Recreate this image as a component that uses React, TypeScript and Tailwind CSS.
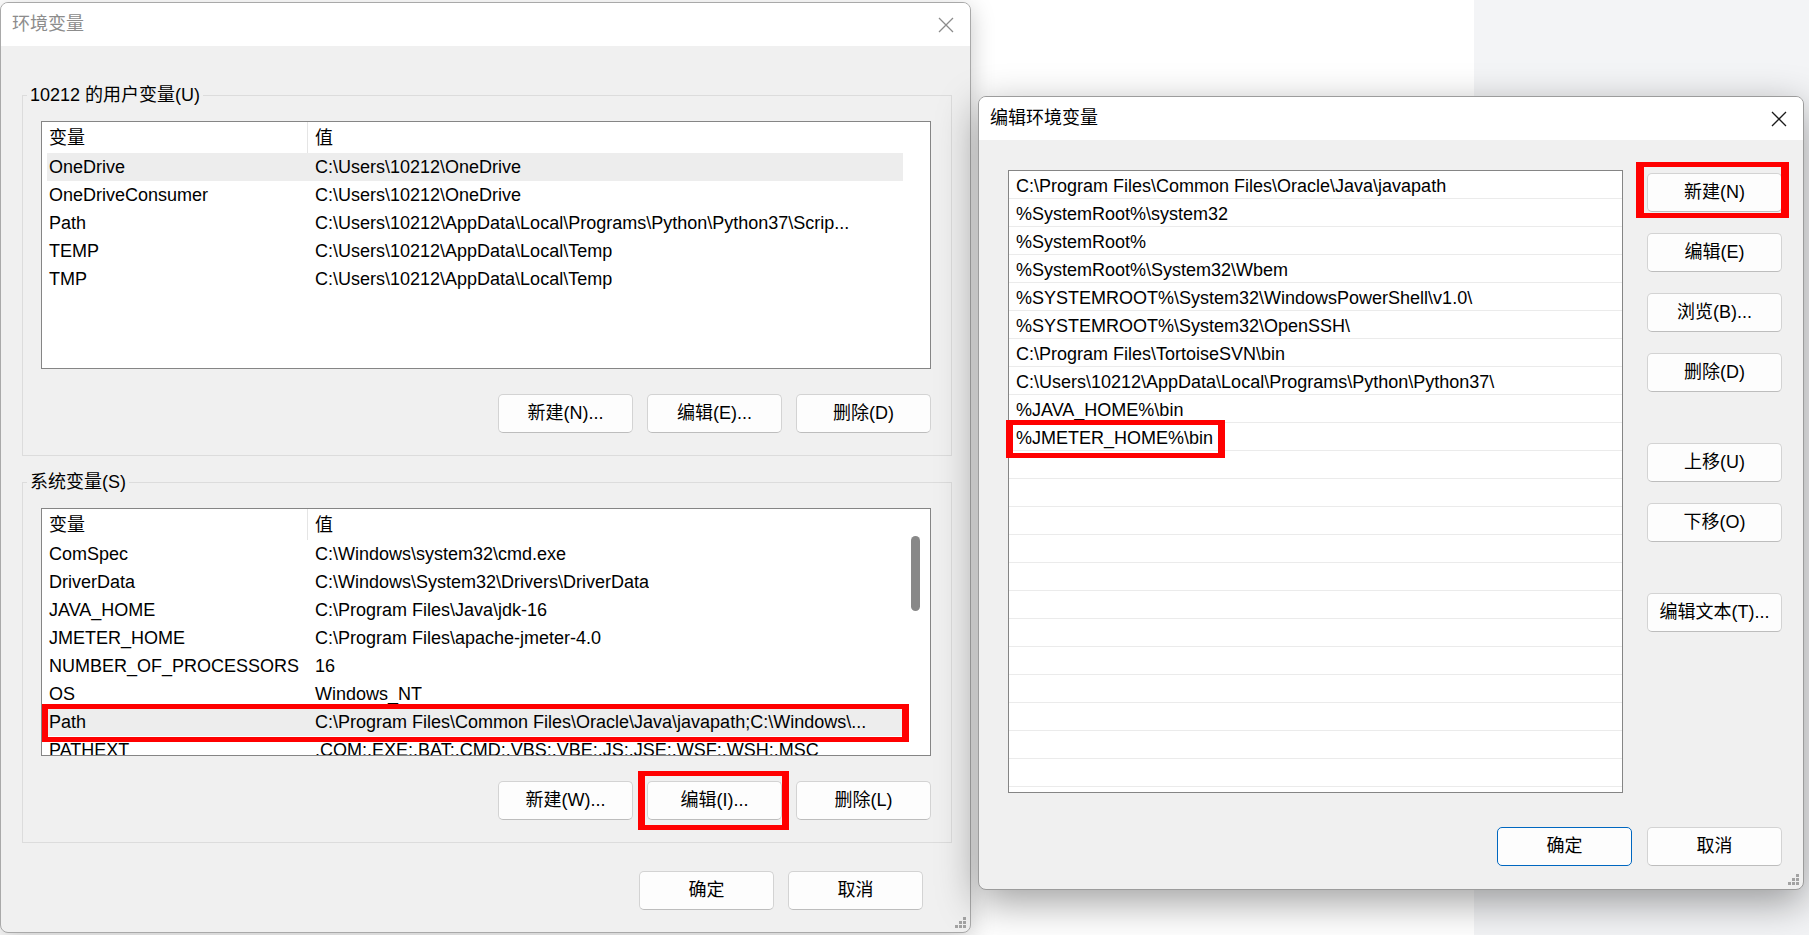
import React from "react";

const FONT = "font-['Liberation_Sans','Noto_Sans_CJK_SC',sans-serif]";

type Row = { name: string; value: string; selected?: boolean; marked?: boolean };

const USER_VARS: Row[] = [
  { name: "OneDrive", value: "C:\\Users\\10212\\OneDrive", selected: true },
  { name: "OneDriveConsumer", value: "C:\\Users\\10212\\OneDrive" },
  { name: "Path", value: "C:\\Users\\10212\\AppData\\Local\\Programs\\Python\\Python37\\Scrip..." },
  { name: "TEMP", value: "C:\\Users\\10212\\AppData\\Local\\Temp" },
  { name: "TMP", value: "C:\\Users\\10212\\AppData\\Local\\Temp" },
];

const SYSTEM_VARS: Row[] = [
  { name: "ComSpec", value: "C:\\Windows\\system32\\cmd.exe" },
  { name: "DriverData", value: "C:\\Windows\\System32\\Drivers\\DriverData" },
  { name: "JAVA_HOME", value: "C:\\Program Files\\Java\\jdk-16" },
  { name: "JMETER_HOME", value: "C:\\Program Files\\apache-jmeter-4.0" },
  { name: "NUMBER_OF_PROCESSORS", value: "16" },
  { name: "OS", value: "Windows_NT" },
  {
    name: "Path",
    value: "C:\\Program Files\\Common Files\\Oracle\\Java\\javapath;C:\\Windows\\...",
    selected: true,
    marked: true,
  },
  { name: "PATHEXT", value: ".COM;.EXE;.BAT;.CMD;.VBS;.VBE;.JS;.JSE;.WSF;.WSH;.MSC" },
];

const PATH_ENTRIES = [
  "C:\\Program Files\\Common Files\\Oracle\\Java\\javapath",
  "%SystemRoot%\\system32",
  "%SystemRoot%",
  "%SystemRoot%\\System32\\Wbem",
  "%SYSTEMROOT%\\System32\\WindowsPowerShell\\v1.0\\",
  "%SYSTEMROOT%\\System32\\OpenSSH\\",
  "C:\\Program Files\\TortoiseSVN\\bin",
  "C:\\Users\\10212\\AppData\\Local\\Programs\\Python\\Python37\\",
  "%JAVA_HOME%\\bin",
  "%JMETER_HOME%\\bin",
];

function CloseIcon({ color }: { color: string }) {
  return (
    <svg width="16" height="16" viewBox="0 0 16 16" fill="none">
      <path d="M1 1L15 15M15 1L1 15" stroke={color} strokeWidth="1.3" />
    </svg>
  );
}

function Grip() {
  return (
    <svg width="12" height="12" viewBox="0 0 12 12" className="absolute right-[3px] bottom-[3px]">
      <rect x="8" y="0" width="3" height="3" fill="#a3a3a3" />
      <rect x="4" y="4" width="3" height="3" fill="#a3a3a3" />
      <rect x="8" y="4" width="3" height="3" fill="#a3a3a3" />
      <rect x="0" y="8" width="3" height="3" fill="#a3a3a3" />
      <rect x="4" y="8" width="3" height="3" fill="#a3a3a3" />
      <rect x="8" y="8" width="3" height="3" fill="#a3a3a3" />
    </svg>
  );
}

function Btn({ label, primary }: { label: string; primary?: boolean }) {
  return (
    <button
      className={
        primary
          ? "h-[39px] w-[135px] shrink-0 rounded-[5px] border border-[#0067c0] bg-[#fdfdfd] text-[18px] text-black flex items-center justify-center"
          : "h-[39px] w-[135px] shrink-0 rounded-[5px] border border-[#d3d3d3] border-b-[#bdbdbd] bg-[#fdfdfd] text-[18px] text-black flex items-center justify-center"
      }
    >
      {label}
    </button>
  );
}

function VarList({ rows, scroll }: { rows: Row[]; scroll?: boolean }) {
  return (
    <div className="ml-[18px] flex h-[248px] w-[890px] overflow-hidden border border-[#858585] bg-white">
      <div className="w-[861px] pl-[5px]">
        <div className="flex h-[31px] items-center">
          <div className="h-full w-[261px] border-r border-[#e5e5e5] pl-[2px] leading-[32px]">变量</div>
          <div className="pl-[7px] pt-[1px]">值</div>
        </div>
        {rows.map((r) => (
          <div
            key={r.name}
            className={
              r.selected
                ? "relative flex h-[28px] items-center whitespace-nowrap bg-[#ededed] pt-[1px]"
                : "relative flex h-[28px] items-center whitespace-nowrap pt-[1px]"
            }
          >
            <div className="w-[261px] shrink-0 pl-[2px]">{r.name}</div>
            <div className="overflow-hidden pl-[7px]">{r.value}</div>
            {r.marked && (
              <span className="pointer-events-none absolute -left-[6px] -right-[6px] -top-[4px] -bottom-[6px] border-x-[7px] border-y-[5px] border-[#ff0000]" />
            )}
          </div>
        ))}
      </div>
      <div className="flex-1 pl-[8px] pt-[27px]">
        {scroll && <div className="h-[75px] w-[9px] rounded-full bg-[#888888]" />}
      </div>
    </div>
  );
}

function EnvDialog() {
  return (
    <div className="absolute left-0 top-[2px] flex h-[931px] w-[971px] flex-col overflow-hidden rounded-[8px] border border-[#a9a9a9] bg-[#f0f0f0] shadow-[0_6px_24px_rgba(0,0,0,0.22)]">
      <div className="flex h-[43px] shrink-0 items-center justify-between bg-white pl-[11px] pr-[16px]">
        <span className="text-[#8c8c8c]">环境变量</span>
        <CloseIcon color="#8c8c8c" />
      </div>
      <div className="flex flex-col pl-[21px]">
        <fieldset className="mt-[37px] w-[930px] border border-[#dcdcdc] p-0 pb-[22px]">
          <legend className="ml-[4px] px-[3px] leading-[24px]">10212 的用户变量(U)</legend>
          <div className="mt-[14px]">
            <VarList rows={USER_VARS} />
          </div>
          <div className="mt-[25px] flex justify-end gap-[14px] pr-[20px]">
            <Btn label="新建(N)..." />
            <Btn label="编辑(E)..." />
            <Btn label="删除(D)" />
          </div>
        </fieldset>
        <fieldset className="mt-[14px] w-[930px] border border-[#dcdcdc] p-0 pb-[22px]">
          <legend className="ml-[4px] px-[3px] leading-[24px]">系统变量(S)</legend>
          <div className="mt-[14px]">
            <VarList rows={SYSTEM_VARS} scroll />
          </div>
          <div className="mt-[25px] flex justify-end gap-[14px] pr-[20px]">
            <Btn label="新建(W)..." />
            <div className="relative">
              <Btn label="编辑(I)..." />
              <span className="pointer-events-none absolute -left-[9px] -right-[7px] -top-[10px] -bottom-[10px] border-x-[7px] border-y-[5px] border-[#ff0000]" />
            </div>
            <Btn label="删除(L)" />
          </div>
        </fieldset>
        <div className="mt-[28px] flex w-[930px] justify-end gap-[14px] pr-[29px]">
          <Btn label="确定" />
          <Btn label="取消" />
        </div>
      </div>
      <Grip />
    </div>
  );
}

function EditDialog() {
  const rows = Array.from({ length: 22 }, (_, i) => PATH_ENTRIES[i] ?? "");
  return (
    <div className="absolute left-[978px] top-[96px] flex h-[794px] w-[826px] flex-col overflow-hidden rounded-[8px] border border-[#9c9c9c] bg-[#f0f0f0] shadow-[0_12px_40px_rgba(0,0,0,0.38)]">
      <div className="flex h-[43px] shrink-0 items-center justify-between bg-white pl-[11px] pr-[16px]">
        <span className="text-black">编辑环境变量</span>
        <CloseIcon color="#1a1a1a" />
      </div>
      <div className="flex flex-col pl-[29px] pt-[30px]">
        <div className="flex gap-[24px]">
          <div className="h-[623px] w-[615px] border border-[#858585] bg-white">
            {rows.map((t, i) => (
              <div
                key={i}
                className="relative h-[28px] whitespace-nowrap border-b border-[#ebebeb] pl-[7px] leading-[31px]"
              >
                {t}
                {t === "%JMETER_HOME%\\bin" && (
                  <span className="pointer-events-none absolute -left-[3px] -top-[3px] h-[38px] w-[219px] border-x-[7px] border-y-[5px] border-[#ff0000]" />
                )}
              </div>
            ))}
          </div>
          <div className="flex flex-col pt-[3px]">
            <div className="relative">
              <Btn label="新建(N)" />
              <span className="pointer-events-none absolute -left-[11px] -right-[7px] -top-[11px] -bottom-[6px] border-x-[8px] border-y-[5px] border-[#ff0000]" />
            </div>
            <div className="mt-[21px]">
              <Btn label="编辑(E)" />
            </div>
            <div className="mt-[21px]">
              <Btn label="浏览(B)..." />
            </div>
            <div className="mt-[21px]">
              <Btn label="删除(D)" />
            </div>
            <div className="mt-[51px]">
              <Btn label="上移(U)" />
            </div>
            <div className="mt-[21px]">
              <Btn label="下移(O)" />
            </div>
            <div className="mt-[51px]">
              <Btn label="编辑文本(T)..." />
            </div>
          </div>
        </div>
        <div className="mt-[34px] flex justify-end gap-[15px] pr-[21px]">
          <Btn label="确定" primary />
          <Btn label="取消" />
        </div>
      </div>
      <Grip />
    </div>
  );
}

export default function App() {
  return (
    <div className={`relative flex h-[935px] w-[1809px] overflow-hidden text-[18px] text-black ${FONT}`}>
      <div className="h-full w-[1474px] bg-white" />
      <div className="h-full flex-1 bg-[#f3f4f6]" />
      <EnvDialog />
      <EditDialog />
    </div>
  );
}
